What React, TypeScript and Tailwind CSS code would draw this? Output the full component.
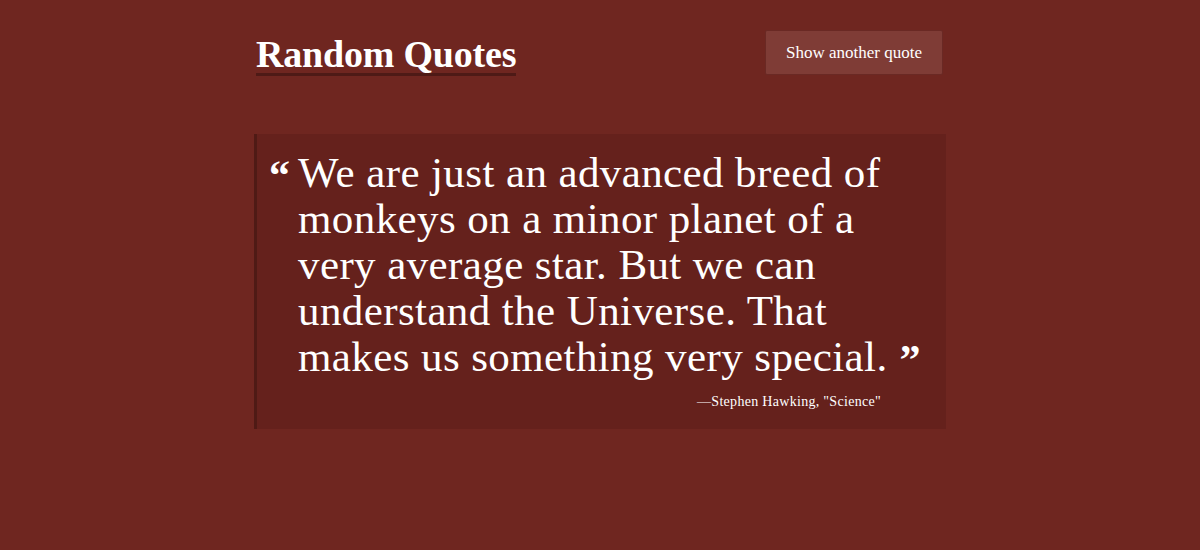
import type { JSX } from "react";

const QUOTE_LINES = [
  "We are just an advanced breed of",
  "monkeys on a minor planet of a",
  "very average star. But we can",
  "understand the Universe. That",
  "makes us something very special.",
];

export default function App(): JSX.Element {
  return (
    <div
      className="min-h-screen bg-[#6f2620] text-white"
      style={{ fontFamily: '"Liberation Serif", "DejaVu Serif", serif' }}
    >
      <div className="mx-auto w-[692px] pt-[30px]">
        <header className="flex items-start justify-between">
          <h1 className="ml-[2px] mt-[6px] border-b-[3px] border-[#4e1a16] pb-[1px] text-[38px] font-bold leading-[36px] tracking-[-0.2px]">
            Random Quotes
          </h1>
          <button className="mr-[3px] h-[45px] w-[178px] rounded-[2px] border border-[#6a2924] bg-[#7f3c36] text-[17px] text-white">
            Show another quote
          </button>
        </header>

        <blockquote className="mt-[58px] border-l-[3px] border-[#4f1a15] bg-[#65211c] pb-[17px] pl-[41px] pr-[20px] pt-[16px]">
          <p className="relative text-[43px] leading-[46px] tracking-[0.4px]">
            <span className="absolute left-[-29px] top-[2px] text-[42px] font-bold">
              &ldquo;
            </span>
            {QUOTE_LINES.map((line, i) => (
              <span key={i} className="block whitespace-nowrap">
                {line}
                {i === QUOTE_LINES.length - 1 && (
                  <span className="relative top-[8px] ml-[12px] align-top text-[42px] font-bold leading-[36px]">
                    &rdquo;
                  </span>
                )}
              </span>
            ))}
          </p>
          <footer className="mt-[11px] pr-[45px] text-right text-[14px] tracking-[0.3px]">
            &mdash;Stephen Hawking, "Science"
          </footer>
        </blockquote>
      </div>
    </div>
  );
}
